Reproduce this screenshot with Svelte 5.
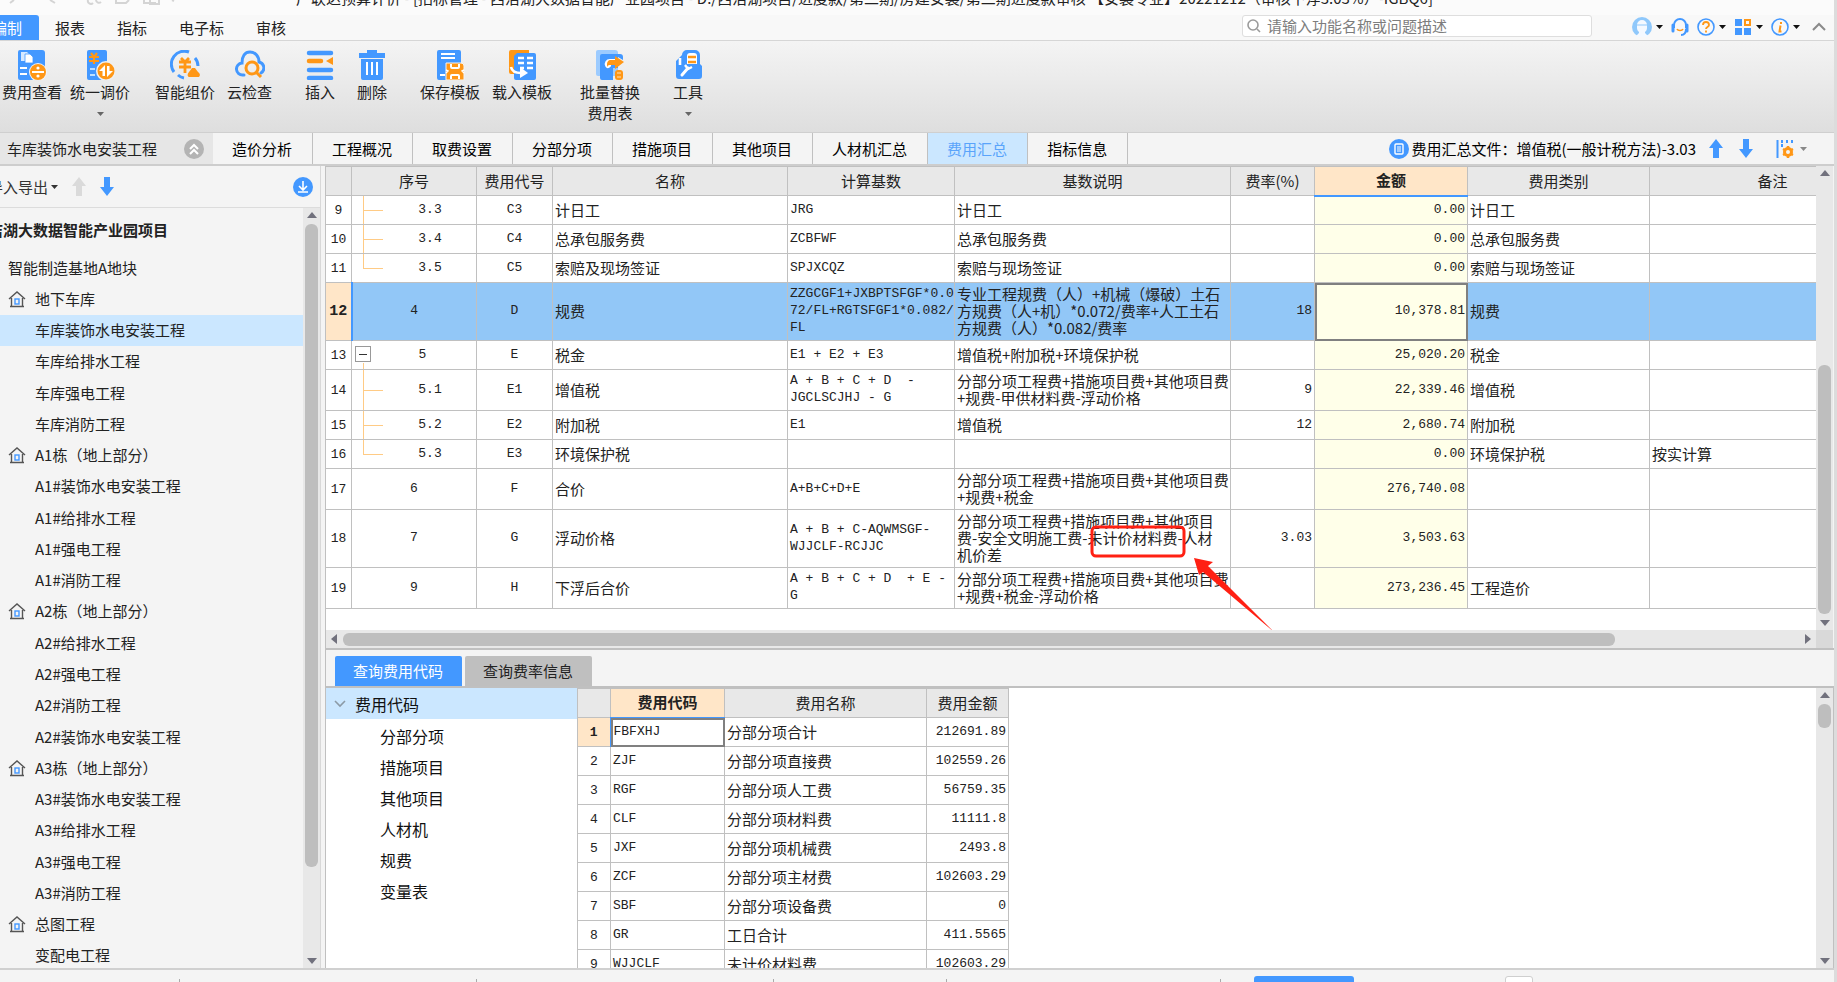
<script>
	const menus = ['报表', '指标', '电子标', '审核'];

	const toolGroups = [
		[
			{ icon: 'view', label: '费用查看' },
			{ icon: 'adjust', label: '统一调价', caret: true }
		],
		[
			{ icon: 'smart', label: '智能组价' },
			{ icon: 'cloud', label: '云检查' }
		],
		[
			{ icon: 'insert', label: '插入' },
			{ icon: 'trash', label: '删除' }
		],
		[
			{ icon: 'save', label: '保存模板' },
			{ icon: 'load', label: '载入模板' }
		],
		[{ icon: 'replace', label: '批量替换', second: '费用表' }],
		[{ icon: 'tools', label: '工具', caret: true }]
	];

	const tabs = ['造价分析', '工程概况', '取费设置', '分部分项', '措施项目', '其他项目', '人材机汇总', '费用汇总', '指标信息'];
	let activeTab = $state('费用汇总');

	const tree = [
		{ name: '智能制造基地A地块', level: 0 },
		{ name: '地下车库', level: 1 },
		{ name: '车库装饰水电安装工程', level: 2 },
		{ name: '车库给排水工程', level: 2 },
		{ name: '车库强电工程', level: 2 },
		{ name: '车库消防工程', level: 2 },
		{ name: 'A1栋（地上部分）', level: 1 },
		{ name: 'A1#装饰水电安装工程', level: 2 },
		{ name: 'A1#给排水工程', level: 2 },
		{ name: 'A1#强电工程', level: 2 },
		{ name: 'A1#消防工程', level: 2 },
		{ name: 'A2栋（地上部分）', level: 1 },
		{ name: 'A2#给排水工程', level: 2 },
		{ name: 'A2#强电工程', level: 2 },
		{ name: 'A2#消防工程', level: 2 },
		{ name: 'A2#装饰水电安装工程', level: 2 },
		{ name: 'A3栋（地上部分）', level: 1 },
		{ name: 'A3#装饰水电安装工程', level: 2 },
		{ name: 'A3#给排水工程', level: 2 },
		{ name: 'A3#强电工程', level: 2 },
		{ name: 'A3#消防工程', level: 2 },
		{ name: '总图工程', level: 1 },
		{ name: '变配电工程', level: 2 }
	];
	let activeNode = $state('车库装饰水电安装工程');

	const rows = [
		{ n: 9, no: '3.3', kind: 'child', code: 'C3', name: '计日工', base: 'JRG', desc: '计日工', rate: '', amount: '0.00', type: '计日工', note: '' },
		{ n: 10, no: '3.4', kind: 'child', code: 'C4', name: '总承包服务费', base: 'ZCBFWF', desc: '总承包服务费', rate: '', amount: '0.00', type: '总承包服务费', note: '' },
		{ n: 11, no: '3.5', kind: 'child last', code: 'C5', name: '索赔及现场签证', base: 'SPJXCQZ', desc: '索赔与现场签证', rate: '', amount: '0.00', type: '索赔与现场签证', note: '' },
		{ n: 12, no: '4', kind: '', code: 'D', name: '规费', base: 'ZZGCGF1+JXBPTSFGF*0.0\n72/FL+RGTSFGF1*0.082/\nFL', desc: '专业工程规费（人）+机械（爆破）土石\n方规费（人+机）*0.072/费率+人工土石\n方规费（人）*0.082/费率', rate: '18', amount: '10,378.81', type: '规费', note: '' },
		{ n: 13, no: '5', kind: 'parent', code: 'E', name: '税金', base: 'E1 + E2 + E3', desc: '增值税+附加税+环境保护税', rate: '', amount: '25,020.20', type: '税金', note: '' },
		{ n: 14, no: '5.1', kind: 'child', code: 'E1', name: '增值税', base: 'A + B + C + D  -\nJGCLSCJHJ - G', desc: '分部分项工程费+措施项目费+其他项目费\n+规费-甲供材料费-浮动价格', rate: '9', amount: '22,339.46', type: '增值税', note: '' },
		{ n: 15, no: '5.2', kind: 'child', code: 'E2', name: '附加税', base: 'E1', desc: '增值税', rate: '12', amount: '2,680.74', type: '附加税', note: '' },
		{ n: 16, no: '5.3', kind: 'child last', code: 'E3', name: '环境保护税', base: '', desc: '', rate: '', amount: '0.00', type: '环境保护税', note: '按实计算' },
		{ n: 17, no: '6', kind: '', code: 'F', name: '合价', base: 'A+B+C+D+E', desc: '分部分项工程费+措施项目费+其他项目费\n+规费+税金', rate: '', amount: '276,740.08', type: '', note: '' },
		{ n: 18, no: '7', kind: '', code: 'G', name: '浮动价格', base: 'A + B + C-AQWMSGF-\nWJJCLF-RCJJC', desc: '分部分项工程费+措施项目费+其他项目\n费-安全文明施工费-未计价材料费-人材\n机价差', rate: '3.03', amount: '3,503.63', type: '', note: '' },
		{ n: 19, no: '9', kind: '', code: 'H', name: '下浮后合价', base: 'A + B + C + D  + E -\nG', desc: '分部分项工程费+措施项目费+其他项目费\n+规费+税金-浮动价格', rate: '', amount: '273,236.45', type: '工程造价', note: '' }
	];
	const selectedRow = 12;

	const codeGroups = ['分部分项', '措施项目', '其他项目', '人材机', '规费', '变量表'];

	const codes = [
		['FBFXHJ', '分部分项合计', '212691.89'],
		['ZJF', '分部分项直接费', '102559.26'],
		['RGF', '分部分项人工费', '56759.35'],
		['CLF', '分部分项材料费', '11111.8'],
		['JXF', '分部分项机械费', '2493.8'],
		['ZCF', '分部分项主材费', '102603.29'],
		['SBF', '分部分项设备费', '0'],
		['GR', '工日合计', '411.5565'],
		['WJJCLF', '未计价材料费', '102603.29']
	];
</script>

{#snippet caret()}
	<svg class="caret" width="7" height="4" viewBox="0 0 7 4" aria-hidden="true"><path d="M0 0h7L3.5 4z" fill="currentColor" /></svg>
{/snippet}

{#snippet arrow(up)}
	<svg width="14" height="19" viewBox="0 0 14 19" aria-hidden="true">
		{#if up}
			<path d="M7 0l7 9h-4v10H4V9H0z" fill="currentColor" />
		{:else}
			<path d="M7 19l7-9h-4V0H4v10H0z" fill="currentColor" />
		{/if}
	</svg>
{/snippet}

{#snippet scrollbar(dir, before, size, after)}
	<div class="scroll {dir}" aria-hidden="true">
		<svg width="10" height="10" viewBox="0 0 10 10"><path d={dir === 'v' ? 'M5 2l5 6H0z' : 'M2 5l6-5v10z'} fill="#71717d" /></svg>
		<span style="flex-grow: {before}"></span>
		<span class="thumb" style="flex-grow: {size}"></span>
		<span style="flex-grow: {after}"></span>
		<svg width="10" height="10" viewBox="0 0 10 10"><path d={dir === 'v' ? 'M5 8l5-6H0z' : 'M8 5L2 0v10z'} fill="#71717d" /></svg>
	</div>
{/snippet}

{#snippet toolIcon(name)}
	<svg width="30" height="30" viewBox="0 0 30 30" fill="none" aria-hidden="true">
		{#if name === 'view'}
			<path d="M3 0h22a3 3 0 0 1 3 3v14l-5-3-8 4-2 6 3 6H3a2 2 0 0 1-2-2V2a2 2 0 0 1 2-2z" fill="#4398ff" />
			<path d="M4 2h6l2 2v7H4z" fill="#d6e9ff" />
			<path d="M8 4h5l3 3v6H8z" fill="#fff" stroke="#4398ff" stroke-width=".8" />
			<path d="M3 18h7M3 24h7" stroke="#fff" stroke-width="2.2" />
			<circle cx="21" cy="22" r="9" fill="#f4f4f4" />
			<circle cx="21" cy="22" r="8" fill="#ff9716" />
			<path d="M15 22h12" stroke="#fff" stroke-width="2" />
			<circle cx="21" cy="18" r="1.600" fill="#fff" />
			<circle cx="21" cy="26" r="1.600" fill="#fff" />
		{:else if name === 'adjust'}
			<path d="M4 0h16a2 2 0 0 1 2 2v28H4a2 2 0 0 1-2-2V2a2 2 0 0 1 2-2z" fill="#4398ff" />
			<path d="M6 3l3 4 3-4M4 7h10M4 11h10M9 7v7" stroke="#ff9716" stroke-width="2.2" />
			<path d="M5 19h5M5 25h5" stroke="#bfe0ff" stroke-width="2" />
			<circle cx="21" cy="21" r="10" fill="#f0f0f0" />
			<circle cx="21" cy="21" r="8.5" fill="#ff9716" />
			<path d="M20 15v11h-2.500v-5H14zM22 27V16h2.500v5H28z" fill="#fff" />
		{:else if name === 'smart'}
			<path d="M4 22A13 13 0 0 1 19 2M14 28a12 12 0 0 1-6-3M25 8a12 12 0 0 1 3 8" stroke="#4398ff" stroke-width="3" />
			<path d="M11 8l4 4 4-4M9 12h12M9 17h12M15 12v11" stroke="#ff9716" stroke-width="2.8" />
			<path d="M25 18l3 4c3 2 2 5 0 5h-8c-3 0-3-3-1-5l3-4z" fill="#ff9716" />
		{:else if name === 'cloud'}
			<path d="M9 25H8a6 6 0 0 1-1-12C7 6 10 2 15 2s9 4 9 10a6 6 0 0 1 2 11" stroke="#4398ff" stroke-width="3" stroke-linecap="round" />
			<circle cx="17" cy="18" r="6" stroke="#ff9716" stroke-width="3" />
			<path d="M21 22l5 5" stroke="#ff9716" stroke-width="3" />
		{:else if name === 'insert'}
			<path d="M4 3h22M4 20h22M4 28h22" stroke="#4398ff" stroke-width="4.5" stroke-linecap="round" />
			<path d="M4 11h12" stroke="#ff9716" stroke-width="4.5" stroke-linecap="round" />
			<path d="M21 11l7-4v8z" fill="#ff9716" />
		{:else if name === 'trash'}
			<path d="M10 3V0h10v3h8v5H2V3z" fill="#4398ff" />
			<path d="M4 9h22v19a2 2 0 0 1-2 2H6a2 2 0 0 1-2-2z" fill="#4398ff" />
			<path d="M10 12v13M15 12v13M20 12v13" stroke="#fff" stroke-width="2" />
		{:else if name === 'save'}
			<path d="M4 0h20a2 2 0 0 1 2 2v12H11v16H4a2 2 0 0 1-2-2V2a2 2 0 0 1 2-2z" fill="#4398ff" />
			<path d="M6 4h14M6 8h14M5 25h5" stroke="#fff" stroke-width="2" />
			<path d="M11 13h15a3 3 0 0 1 3 3v14H11z" fill="#ff9716" stroke="#f4f4f4" />
			<path d="M16 14v3a1 1 0 0 0 1 1h6a1 1 0 0 0 1-1v-3M16 29v-3a1 1 0 0 1 1-1h6a1 1 0 0 1 1 1v3" stroke="#fff" stroke-width="2" />
			<path d="M11 20l2 1-2 2M29 20l-2 1 2 2" stroke="#fff" stroke-width="1.4" />
		{:else if name === 'load'}
			<path d="M4 0h18v6H9v18H4a2 2 0 0 1-2-2V2a2 2 0 0 1 2-2z" fill="#ff9716" />
			<path d="M10 3h17a2 2 0 0 1 2 2v23a2 2 0 0 1-2 2H9a2 2 0 0 1-2-2V6z" fill="#4398ff" />
			<path d="M11 8h6M20 8h6M11 13h6M20 13h6M13 18h4M20 18h6" stroke="#fff" stroke-width="2.6" />
			<path d="M4 17c1 5 5 6 10 6" stroke="#fff" stroke-width="2.6" />
			<path d="M13 17l8 6-8 5z" fill="#fff" />
		{:else if name === 'replace'}
			<path d="M3 0h17a3 3 0 0 1 3 3v23H3a2 2 0 0 1-2-2V2a2 2 0 0 1 2-2z" fill="#9ccbff" />
			<path d="M7 4h18a3 3 0 0 1 3 3v3l-5-3v11h-5v12H7a2 2 0 0 1-2-2V6a2 2 0 0 1 2-2z" fill="#4398ff" />
			<path d="M20 12h-5a2 2 0 0 0-2 3" stroke="#fff" stroke-width="6" stroke-linecap="round" />
			<path d="M12 15c0-3 1-5 4-5h4V6l9 6-9 7v-4h-4c-2 0-3 0-4 2z" fill="#ff9716" />
			<rect x="20" y="20" width="8" height="10" rx="3" fill="#ff9716" />
			<path d="M22 23h4M22 27h4" stroke="#ffe0b5" />
		{:else}
			<path d="M9 5a5 5 0 0 1 5-5h8a5 5 0 0 1 5 5v9l2 2v10a3 3 0 0 1-3 3H6a3 3 0 0 1-3-3V11z" fill="#4398ff" />
			<path d="M7 8v7" stroke="#fff" stroke-width="2.6" />
			<path d="M14 6a3 3 0 0 1 3-3h4a3 3 0 0 1 3 3v8H14z" fill="#fff" />
			<path d="M15 7h8M15 12h8" stroke="#ff9716" stroke-width="2.4" />
			<path d="M9 25l6-7" stroke="#fff" stroke-width="3" stroke-linecap="round" />
			<path d="M12 15l3 4 4-2" stroke="#fff" stroke-width="2.4" />
		{/if}
	</svg>
{/snippet}

<div class="app">
	<header class="titlebar">
		<svg class="quick" width="180" height="5" viewBox="0 0 180 5" fill="none" stroke="#d4d4d4" stroke-width="2" aria-hidden="true">
			<path d="M14 0l-4 3M50 0l5 3M88 0a3 3 0 0 0 5 3M96 0a3 3 0 0 0 5 2M116 0v3h10l3-3M144 0v3h12M150 0v4h9V0M172 0l2 1" />
		</svg>
		<h1>广联达预算计价 - [招标管理 - 西洁湖大数据智能产业园项目 - D:/西洁湖项目/进度款/第二期/房建安装/第二期进度款审核 【安装专业】20221212（审核下浮3.03%）-IGBQ6]</h1>
	</header>

	<nav class="menubar">
		<button class="menu active"><span>编制</span></button>
		{#each menus as m}
			<button class="menu">{m}</button>
		{/each}
		<label class="search">
			<svg width="14" height="16" viewBox="0 0 14 16" fill="none" stroke="#9b9b9b" stroke-width="1.6" aria-hidden="true"><circle cx="6" cy="7" r="5" /><path d="M10 11l3 3" /></svg>
			<input type="text" placeholder="请输入功能名称或问题描述" aria-label="搜索功能" />
		</label>
		<div class="menu-icons">
			<button aria-label="用户">
				<svg width="20" height="20" viewBox="0 0 20 20"><circle cx="10" cy="10" r="10" fill="#8fc8fb" /><path d="M5 8a5 5 0 0 1 10 0v3c0 2-1 3-2 4v1l3 3a10 10 0 0 1-12 0l3-3v-1c-1-1-2-2-2-4z" fill="#f4f9ff" /><path d="M4 8h12" stroke="#8fc8fb" /></svg>
				{@render caret()}
			</button>
			<button aria-label="客服">
				<svg width="18" height="20" viewBox="0 0 18 20" fill="none"><path d="M3 11V8a6 6 0 0 1 12 0v3M15 12c0 4-2 6-5 6" stroke="#4398ff" stroke-width="2" /><path d="M2 8v6M16 8v6" stroke="#4398ff" stroke-width="3" stroke-linecap="round" /><path d="M6 12c1 2 5 2 6 0" stroke="#ff9716" stroke-width="1.6" /></svg>
			</button>
			<button aria-label="帮助">
				<svg width="18" height="20" viewBox="0 0 18 20" fill="none"><circle cx="9" cy="10" r="8" stroke="#4398ff" stroke-width="1.6" /><path d="M6 8c0-4 6-4 6 0 0 2-3 2-3 4M9 13.500v2" stroke="#ff9716" stroke-width="1.8" /></svg>
				{@render caret()}
			</button>
			<button aria-label="应用">
				<svg width="18" height="20" viewBox="0 0 18 20" fill="none"><path d="M1 2h7v7H1zM1 11h7v7H1zM10 11h7v7h-7z" fill="#4398ff" /><rect x="11" y="3" width="5" height="5" stroke="#ff9716" stroke-width="2" /></svg>
				{@render caret()}
			</button>
			<button aria-label="关于">
				<svg width="18" height="20" viewBox="0 0 18 20" fill="none"><circle cx="9" cy="10" r="8" stroke="#4398ff" stroke-width="1.6" /><path d="M10 5v2M9.500 8.500l-1 6h2" stroke="#ff9716" stroke-width="2" /></svg>
				{@render caret()}
			</button>
			<button class="collapse" aria-label="收起功能区">
				<svg width="14" height="10" viewBox="0 0 14 10" fill="none" stroke="#8a8a8a" stroke-width="2"><path d="M1 8l6-6 6 6" /></svg>
			</button>
		</div>
	</nav>

	<div class="ribbon">
		{#each toolGroups as group}
			<div class="group">
				{#each group as tool}
					<button class="tool">
						{@render toolIcon(tool.icon)}
						<span>{tool.label}</span>
						{#if tool.second}<span>{tool.second}</span>{/if}
						{#if tool.caret}<span class="more">{@render caret()}</span>{/if}
					</button>
				{/each}
			</div>
		{/each}
	</div>

	<div class="tabbar">
		<div class="current">
			<span>车库装饰水电安装工程</span>
			<button class="round grey" aria-label="收起">
				<svg width="20" height="20" viewBox="0 0 20 20" fill="none" stroke="#fff" stroke-width="2"><path d="M6 10l4-4 4 4M6 15l4-4 4 4" /></svg>
			</button>
		</div>
		{#each tabs as t}
			<button class="tab" class:active={t === activeTab} onclick={() => (activeTab = t)}>{t}</button>
		{/each}
		<div class="file">
			<svg width="20" height="20" viewBox="0 0 20 20" fill="none" aria-hidden="true"><circle cx="10" cy="10" r="10" fill="#4398ff" /><rect x="6" y="5" width="8" height="10" rx="1" stroke="#fff" stroke-width="1.4" /><path d="M8 8h4M8 10h4M8 12h4" stroke="#fff" /></svg>
			<span>费用汇总文件：增值税(一般计税方法)-3.03</span>
			<button class="blue" aria-label="上移">{@render arrow(true)}</button>
			<button class="blue" aria-label="下移">{@render arrow(false)}</button>
			<button class="columns" aria-label="列设置">
				<svg width="18" height="20" viewBox="0 0 18 20" fill="none"><path d="M1.500 1v18" stroke="#4398ff" stroke-width="2" /><path d="M6 1v7M11 1v4M16 1v4" stroke="#4398ff" stroke-width="2" stroke-dasharray="3 1" /><circle cx="12" cy="13" r="3.500" stroke="#ff9716" stroke-width="3" /><path d="M12 7v2M12 17v2M7 10l2 1M15 15l2 1M7 16l2-1M15 11l2-1" stroke="#ff9716" stroke-width="2.500" /></svg>
				{@render caret()}
			</button>
		</div>
	</div>

	<div class="body">
		<aside class="sidebar">
			<div class="side-tools">
				<button class="import"><span>导入导出</span>{@render caret()}</button>
				<button class="dim" aria-label="上移">{@render arrow(true)}</button>
				<button class="blue" aria-label="下移">{@render arrow(false)}</button>
				<button class="round locate" aria-label="展开">
					<svg width="20" height="20" viewBox="0 0 20 20" fill="none" stroke="#fff" stroke-width="1.6"><path d="M10 4v8M6 9l4 4 4-4M5 15h10" /></svg>
				</button>
			</div>
			<div class="side-body">
				<div class="side-list">
					<div class="project"><span>洁湖大数据智能产业园项目</span></div>
					<ul>
						{#each tree as node}
							<li class="level-{node.level}" class:active={node.name === activeNode}>
								<button onclick={() => (activeNode = node.name)}>
									{#if node.level === 1}
										<svg width="18" height="18" viewBox="0 0 18 18" fill="none" aria-hidden="true"><path d="M1 9l8-7 8 7M3.500 8v8.500M14.500 8v8.500M2 16.500h14" stroke="#555" stroke-width="1.4" /><rect x="7" y="9" width="4" height="5" stroke="#4398ff" stroke-width="1.4" /></svg>
									{/if}
									{node.name}
								</button>
							</li>
						{/each}
					</ul>
				</div>
				{@render scrollbar('v', 0, 644, 85)}
			</div>
		</aside>

		<main class="main">
			<section class="grid-area">
				<div class="grid-view">
					<table class="fees">
						<colgroup>
							<col class="w-n" /><col class="w-no" /><col class="w-code" /><col class="w-name" /><col class="w-base" />
							<col class="w-desc" /><col class="w-rate" /><col class="w-amount" /><col class="w-type" /><col class="w-note" />
						</colgroup>
						<thead>
							<tr>
								<th></th><th>序号</th><th>费用代号</th><th>名称</th><th>计算基数</th>
								<th>基数说明</th><th>费率(%)</th><th class="hot">金额</th><th>费用类别</th><th>备注</th>
							</tr>
						</thead>
						<tbody>
							{#each rows as r}
								<tr class:selected={r.n === selectedRow}>
									<th scope="row">{r.n}</th>
									<td class="mono center {r.kind}">
										{#if r.kind === 'parent'}
											<div class="branch">
												<button class="toggle" aria-label="折叠"></button>
												<span>{r.no}</span>
											</div>
										{:else}
											{r.no}
										{/if}
									</td>
									<td class="mono center">{r.code}</td>
									<td>{r.name}</td>
									<td class="mono">{r.base}</td>
									<td>{r.desc}</td>
									<td class="mono right">{r.rate}</td>
									<td class="mono right amount">{r.amount}</td>
									<td>{r.type}</td>
									<td>{r.note}</td>
								</tr>
							{/each}
						</tbody>
					</table>
					<svg class="callout" width="190" height="114" viewBox="0 0 190 114" fill="none" aria-hidden="true">
						<rect x="4" y="4" width="92" height="29" rx="4" stroke="#ff2013" stroke-width="3" />
						<path d="M106 35l19 4-5 4 66 66-71-60-4 3z" fill="#ff2013" />
					</svg>
				</div>
				{@render scrollbar('v', 182, 248, 0)}
				{@render scrollbar('h', 0, 1273, 184)}
				<div class="corner"></div>
			</section>

			<div class="query-tabs">
				<button class="query active">查询费用代码</button>
				<button class="query">查询费率信息</button>
			</div>

			<section class="query-area">
				<div class="code-tree">
					<button class="root">
						<svg width="12" height="8" viewBox="0 0 12 8" fill="none" stroke="#8c9aa6" stroke-width="1.6" aria-hidden="true"><path d="M1 1l5 5 5-5" /></svg>
						费用代码
					</button>
					{#each codeGroups as g}
						<button>{g}</button>
					{/each}
				</div>
				<div class="code-view">
					<table class="codes">
						<colgroup><col class="c-n" /><col class="c-code" /><col class="c-name" /><col class="c-sum" /></colgroup>
						<thead>
							<tr><th></th><th class="hot">费用代码</th><th>费用名称</th><th>费用金额</th></tr>
						</thead>
						<tbody>
							{#each codes as [code, name, sum], i}
								<tr class:first={i === 0}>
									<th scope="row">{i + 1}</th>
									<td class="mono">{code}</td>
									<td>{name}</td>
									<td class="mono right">{sum}</td>
								</tr>
							{/each}
						</tbody>
					</table>
				</div>
				{@render scrollbar('v', 0, 24, 222)}
			</section>
		</main>
	</div>

	<footer class="status">
		<span class="s1"></span><span class="s2"></span><span class="s2"></span><span class="s3"></span><span class="s4"></span>
		<button class="pill" aria-label="状态"></button>
		<button class="box" aria-label="缩放"></button>
	</footer>
</div>

<style>
	:global(body) {
		margin: 0;
		background: #dcdcdc;
	}

	:global(*) {
		box-sizing: border-box;
	}

	.app {
		--blue: #4398ff;
		--line: #c0c0c0;
		--pick: #cbe7ff;
		--warm: #ffe6c8;
		--panel: #f4f4f4;
		height: 100vh;
		margin-right: 3px;
		display: flex;
		flex-direction: column;
		overflow: hidden;
		background: var(--panel);
		color: #222;
		font: 15px/20px 'Noto Sans CJK SC', sans-serif;
	}

	button {
		border: 0;
		padding: 0;
		background: none;
		color: inherit;
		font: inherit;
		white-space: nowrap;
	}

	svg {
		display: block;
		flex: none;
	}

	/* title and menus */
	.titlebar {
		display: flex;
		height: 15px;
		overflow: hidden;
		background: #fbfbfb;
	}

	.quick {
		margin-right: 116px;
	}

	h1 {
		margin: -12px 0 0;
		font-size: 15px;
		font-weight: 400;
		line-height: 20px;
		white-space: nowrap;
	}

	.menubar {
		display: flex;
		flex: none;
		height: 26px;
		align-items: stretch;
		background: #f8f8f8;
		border-bottom: 1px solid #d6d6d6;
	}

	.menu {
		margin-left: 32px;
	}

	.menu.active {
		width: 39px;
		margin: 0 -16px 0 0;
		overflow: hidden;
		text-align: left;
		border-radius: 0 3px 0 0;
		background: var(--blue);
		color: #fff;
	}

	.menu.active span {
		margin-left: -8px;
	}

	.search {
		display: flex;
		align-items: center;
		gap: 6px;
		width: 350px;
		height: 22px;
		margin-left: auto;
		padding: 0 4px;
		background: #fff;
		border: 1px solid #dedede;
		border-radius: 3px;
	}

	.search input {
		flex: 1;
		min-width: 0;
		padding: 0;
		border: 0;
		outline: 0;
		font: inherit;
		background: none;
	}

	.search input::placeholder {
		color: #7d7d7d;
	}

	.menu-icons {
		display: flex;
		align-items: center;
		gap: 8px;
		padding: 0 8px 2px 40px;
	}

	.menu-icons button {
		display: flex;
		align-items: center;
		gap: 4px;
		color: #111;
	}

	.menu-icons .collapse {
		padding-left: 4px;
	}

	/* ribbon */
	.ribbon {
		display: flex;
		flex: none;
		gap: 16px;
		height: 91px;
		padding-top: 9px;
		background: linear-gradient(#f4f4f4, #dedede);
	}

	.group {
		display: flex;
		align-items: flex-start;
	}

	.group:first-child {
		margin: 0 -1px 0 -2px;
	}

	.tool {
		display: flex;
		flex-direction: column;
		align-items: center;
		min-width: 52px;
		padding: 0 6px;
		line-height: 21px;
	}

	.group:first-child .tool {
		padding: 0 4px;
	}

	.tool svg {
		margin-bottom: 1px;
	}

	.more {
		padding-top: 10px;
		color: #666;
	}

	/* page tabs */
	.tabbar {
		display: flex;
		flex: none;
		height: 34px;
		background: var(--panel);
		border-top: 1px solid #cfcfcf;
		border-bottom: 2px solid #cdcdcd;
	}

	.current {
		display: flex;
		align-items: center;
		justify-content: space-between;
		width: 213px;
		padding: 0 9px 0 7px;
		background: #e6e6e6;
	}

	.round {
		width: 20px;
		height: 20px;
		border-radius: 50%;
		background: var(--blue);
	}

	.round.grey {
		background: #b4b4b4;
	}

	.tab {
		min-width: 100px;
		padding: 0 20px 0 19px;
		border-right: 1px solid var(--line);
		color: #000;
	}

	.tab.active {
		background: var(--pick);
		color: #5aa4fb;
	}

	.file {
		display: flex;
		align-items: center;
		gap: 3px;
		margin-left: auto;
		padding-right: 27px;
		white-space: nowrap;
		color: #000;
	}

	.file .blue {
		margin-left: 10px;
		margin-right: 3px;
	}

	.blue {
		color: var(--blue);
	}

	.columns {
		display: flex;
		align-items: center;
		gap: 6px;
		margin-left: 17px;
		color: #888;
	}

	.body {
		display: flex;
		flex: 1;
		min-height: 0;
		gap: 4px;
	}

	/* project tree */
	.sidebar {
		display: flex;
		flex-direction: column;
		width: 321px;
		flex: none;
		border-right: 1px solid #d8d8d8;
	}

	.side-tools {
		display: flex;
		flex: none;
		align-items: center;
		gap: 14px;
		height: 42px;
		padding-right: 7px;
		border-bottom: 1px solid #dcdcdc;
		overflow: hidden;
	}

	.import {
		display: flex;
		align-items: center;
		gap: 3px;
		margin-left: -12px;
		color: #333;
	}

	.dim {
		color: #dadada;
	}

	.locate {
		margin-left: auto;
	}

	.side-body {
		display: flex;
		flex: 1;
		min-height: 0;
	}

	.side-list {
		display: flex;
		flex: 1;
		flex-direction: column;
		overflow: hidden;
	}

	.project {
		flex: none;
		padding: 12px 0;
		font-weight: 700;
	}

	.project span {
		margin-left: -12px;
	}

	.sidebar ul {
		display: grid;
		grid-auto-rows: 1fr;
		flex: 1;
		margin: 0 0 -3px;
		padding: 0;
		list-style: none;
	}

	.sidebar li {
		display: flex;
		padding-left: 8px;
	}

	.sidebar li.active {
		background: var(--pick);
	}

	.sidebar li.level-2 {
		padding-left: 35px;
	}

	.sidebar li button {
		display: flex;
		flex: 1;
		align-items: center;
		gap: 9px;
	}

	/* scrollbars */
	.scroll {
		display: flex;
		align-items: center;
		justify-content: space-between;
		flex: none;
		gap: 2px;
		background: #e8e8e8;
	}

	.scroll.v {
		flex-direction: column;
		width: 17px;
		padding: 2px 0;
	}

	.scroll.h {
		height: 18px;
		padding: 0 3px;
	}

	.thumb {
		border-radius: 6px;
		background: #bebebe;
	}

	.v .thumb {
		width: 13px;
	}

	.h .thumb {
		height: 13px;
	}

	/* fee grid */
	.main {
		display: flex;
		flex: 1;
		flex-direction: column;
		min-width: 0;
		border-left: 1px solid var(--line);
	}

	.grid-area {
		display: grid;
		flex: none;
		grid-template-columns: minmax(0, 1fr) 17px;
		padding-right: 1px;
		border-bottom: 2px solid var(--line);
	}

	.grid-view {
		position: relative;
		overflow: hidden;
		padding-bottom: 21px;
		background: #fff;
	}

	.corner {
		background: #d9d9d9;
	}

	table {
		border-collapse: collapse;
		table-layout: fixed;
		line-height: 17px;
	}

	.fees {
		width: 1570px;
		margin-left: -1px;
	}

	.w-n { width: 26px; }
	.w-no { width: 125px; }
	.w-code { width: 76px; }
	.w-name { width: 235px; }
	.w-base { width: 167px; }
	.w-desc { width: 276px; }
	.w-rate { width: 84px; }
	.w-amount { width: 153px; }
	.w-type { width: 182px; }
	.w-note { width: 246px; }

	th,
	td {
		height: 29px;
		padding: 2px 2px 4px;
		border: 1px solid var(--line);
		font-weight: 400;
		text-align: left;
		white-space: pre;
	}

	thead th {
		padding: 0 0 2px;
		background: #e8e8e8;
		text-align: center;
	}

	thead th.hot {
		background: var(--warm);
		border-bottom: 2px solid var(--blue);
		font-weight: 700;
	}

	tbody th {
		padding: 0;
		text-align: center;
		font-family: 'Liberation Mono', monospace;
		font-size: 13px;
	}

	td {
		background: #fff;
	}

	.mono {
		font-family: 'Liberation Mono', monospace;
		font-size: 13px;
	}

	.center {
		text-align: center;
	}

	.right {
		text-align: right;
	}

	.amount {
		background: #ffffe9;
	}

	.child {
		padding-left: 34px;
		background:
			linear-gradient(#ffcb85, #ffcb85) 11px 0 / 1px 100% no-repeat,
			linear-gradient(#ffcb85, #ffcb85) 11px 50% / 20px 1px no-repeat,
			#fff;
	}

	.child.last {
		background-size: 1px 50%, 20px 1px, auto;
	}

	.parent {
		background: linear-gradient(#ffcb85, #ffcb85) 11px 100% / 1px 6px no-repeat #fff;
	}

	.branch {
		display: flex;
		align-items: center;
	}

	.branch span {
		flex: 1;
	}

	.toggle {
		display: grid;
		place-items: center;
		width: 16px;
		height: 16px;
		margin-left: 1px;
		border: 1px solid #999;
		background: #fff;
	}

	.toggle::before {
		content: '';
		width: 8px;
		height: 1px;
		background: #333;
	}

	.selected td {
		background: #92c7f7;
	}

	.selected th {
		background: var(--warm);
		border-right: 2px solid var(--blue);
		font-weight: 700;
		font-size: 15px;
	}

	.selected td.amount {
		background: #ffffe9;
		outline: 2px solid #808080;
		outline-offset: -2px;
	}

	.callout {
		position: absolute;
		left: 762px;
		top: 357px;
	}

	/* query panel */
	.query-tabs {
		display: flex;
		flex: none;
		gap: 3px;
		height: 38px;
		padding: 6px 9px 0;
		border-bottom: 2px solid var(--line);
	}

	.query {
		padding: 0 19px 0 18px;
		border-radius: 2px 2px 0 0;
		background: #bfbfbf;
	}

	.query.active {
		background: var(--blue);
		color: #fff;
	}

	.query-area {
		display: flex;
		flex: 1;
		min-height: 0;
		background: #fff;
		border-right: 1px solid var(--line);
	}

	.code-tree {
		display: flex;
		flex-direction: column;
		width: 251px;
		flex: none;
	}

	.code-tree button {
		height: 31px;
		padding: 2px 0 0 54px;
		text-align: left;
		font-size: 16px;
		color: #111;
	}

	.code-tree .root {
		display: flex;
		align-items: center;
		gap: 9px;
		padding: 0 8px;
		background: var(--pick);
	}

	.code-view {
		flex: 1;
		overflow: hidden;
	}

	.codes {
		width: 431px;
	}

	.c-n { width: 33px; }
	.c-code { width: 114px; }
	.c-name { width: 202px; }
	.c-sum { width: 82px; }

	.first th {
		background: var(--warm);
		font-weight: 700;
	}

	.first td:nth-child(2) {
		outline: 2px solid #808080;
		outline-offset: -2px;
		border-left: 2px solid var(--blue);
	}

	/* status bar */
	.status {
		display: flex;
		flex: none;
		height: 14px;
		padding-top: 6px;
		overflow: hidden;
		border-top: 2px solid #d0d0d0;
	}

	.status span {
		height: 12px;
		margin-top: 3px;
		border-right: 1px solid #aaa;
	}

	.s1 { width: 180px; }
	.s2 { width: 297px; }
	.s3 { width: 173px; }
	.s4 { width: 274px; }

	.pill {
		width: 100px;
		height: 20px;
		margin: 0 151px 0 33px;
		border-radius: 3px;
		background: var(--blue);
	}

	.box {
		width: 28px;
		height: 20px;
		border: 1px solid #cfcfcf;
		border-radius: 3px;
		background: #fff;
	}
</style>
